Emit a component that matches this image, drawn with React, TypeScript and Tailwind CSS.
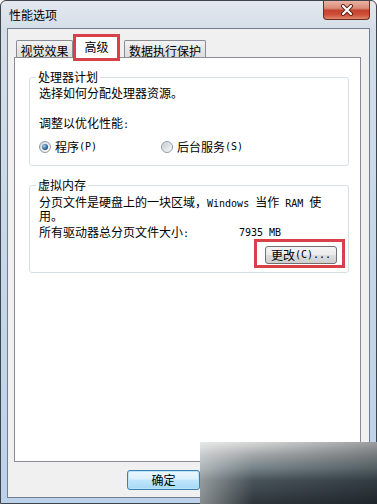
import React from "react";

const mono = "font-['DejaVu_Sans_Mono',monospace] text-[10px]";

function Radio({ checked }: { checked?: boolean }) {
  return (
    <div className="w-[12px] h-[12px] rounded-full border border-[#8f9aa5] bg-[linear-gradient(135deg,#d4d8dc,#fbfbfb)] flex items-center justify-center shrink-0">
      {checked ? (
        <div className="w-[6px] h-[6px] rounded-full bg-[radial-gradient(circle_at_35%_35%,#9fd0f2,#2a5d8c_60%,#17375a)]" />
      ) : (
        <div className="w-[8px] h-[8px] rounded-full bg-[linear-gradient(135deg,#c9cdd1,#f4f4f4)]" />
      )}
    </div>
  );
}

export default function App() {
  return (
    <div className="relative w-[377px] h-[504px] overflow-hidden bg-white font-['Noto_Sans_CJK_SC',sans-serif] text-black">
      <div className="w-[377px] h-[504px] flex flex-col border border-[#3d444c] rounded-t-[6px] bg-[linear-gradient(to_bottom,#e3e8ee_0px,#d5dee8_28px,#c3d6eb_60%,#bcd2ea_100%)]">
        {/* title bar */}
        <div className="h-[27px] flex items-start shrink-0">
          <div className="pl-[8px] pt-[7px] text-[12px] leading-[14px]">性能选项</div>
          <div className="ml-auto mr-[6px] w-[47px] h-[19px] rounded-b-[4px] border border-t-0 border-[#6b2c22] bg-[linear-gradient(to_bottom,#eab3a4_0%,#d98b78_40%,#c4432f_52%,#cc4e38_75%,#e0866a_100%)] flex items-center justify-center">
            <svg width="14" height="12" viewBox="0 0 14 12">
              <path d="M3 2 L11 10 M11 2 L3 10" stroke="#5a2018" strokeWidth="4" strokeLinecap="round" />
              <path d="M3 2 L11 10 M11 2 L3 10" stroke="#ffffff" strokeWidth="2.2" strokeLinecap="round" />
            </svg>
          </div>
        </div>

        {/* client area */}
        <div className="mx-[6px] h-[470px] shrink-0 border border-[#6f8096] bg-[#f0f0f0] flex flex-col">
          {/* tabs */}
          <div className="mt-[6px] pl-[8px] h-[23px] flex items-end text-[12px] leading-[14px]">
            <div className="w-[57px] h-[18px] border border-b-0 border-[#898c95] rounded-t-[2px] bg-[linear-gradient(to_bottom,#f3f3f3,#e5e5e5_50%,#dcdcdc)] flex items-center justify-center pt-[3px]">
              视觉效果
            </div>
            <div className="relative ml-[1px] w-[45px] h-[23px] border border-b-0 border-[#898c95] rounded-t-[2px] bg-white flex justify-center pt-[4px]">
              高级
              <div className="absolute left-[-2px] top-[-2px] w-[47px] h-[27px] border-[3px] border-[#d8414a]" />
            </div>
            <div className="ml-[5px] w-[82px] h-[18px] border border-b-0 border-[#898c95] rounded-t-[2px] bg-[linear-gradient(to_bottom,#f3f3f3,#e5e5e5_50%,#dcdcdc)] flex items-center justify-center pt-[3px]">
              数据执行保护
            </div>
          </div>

          {/* panel */}
          <div className="-mt-px ml-[6px] w-[347px] h-[405px] border border-[#898c95] bg-white flex flex-col text-[12px] leading-[14px]">
            {/* group 1 */}
            <fieldset className="mt-[12px] ml-[14px] w-[320px] border border-[#d5dfe5] rounded-[3px] pl-[9px] pt-[2px] pb-[11px]">
              <legend className="-ml-[3px] px-[2px] leading-[14px]">处理器计划</legend>
              <div>选择如何分配处理器资源。</div>
              <div className="mt-[16px]">
                调整以优化性能<span className={mono}>:</span>
              </div>
              <div className="mt-[8px] h-[14px] flex items-center">
                <div className="w-[122px] flex items-center">
                  <Radio checked />
                  <span className="ml-[4px]">程序</span>
                  <span className={mono}>(P)</span>
                </div>
                <div className="flex items-center">
                  <Radio />
                  <span className="ml-[4px]">后台服务</span>
                  <span className={mono}>(S)</span>
                </div>
              </div>
            </fieldset>

            {/* group 2 */}
            <fieldset className="mt-[12px] ml-[14px] w-[320px] border border-[#d5dfe5] rounded-[3px] pl-[9px] pt-[3px] pb-[8px]">
              <legend className="-ml-[3px] px-[2px] leading-[14px]">虚拟内存</legend>
              <div className="flex flex-col">
                <div className="h-[14px] leading-[14px] whitespace-nowrap">
                  分页文件是硬盘上的一块区域，<span className={mono}>Windows </span>当作<span className={mono}> RAM </span>使
                </div>
                <div className="h-[14px] leading-[14px]">用。</div>
              </div>
              <div className="mt-[3px] h-[14px] flex items-center">
                <div className="w-[200px]">
                  所有驱动器总分页文件大小<span className={mono}>:</span>
                </div>
                <span className={mono}>7935 MB</span>
              </div>
              <div className="mt-[6px] flex justify-end pr-[11px]">
                <div className="relative">
                  <div className="w-[72px] h-[18px] rounded-[3px] border border-[#707070] bg-[linear-gradient(to_bottom,#f4f4f4,#ebebeb_50%,#dddddd_51%,#cfcfcf)] flex items-center justify-center">
                    <span>更改</span>
                    <span className={mono}>(C)...</span>
                  </div>
                  <div className="absolute left-[-11px] top-[-7px] w-[91px] h-[29px] border-[3px] border-[#d8414a]" />
                </div>
              </div>
            </fieldset>
          </div>

          {/* OK button */}
          <div className="mt-[8px] ml-[119px] w-[73px] h-[20px] rounded-[3px] border border-[#3c7fb1] bg-[linear-gradient(to_bottom,#eaf6fd,#d9f0fc_45%,#bee6fd_50%,#a7d9f5)] flex items-center justify-center text-[12px] leading-[14px] shadow-[inset_0_0_0_1px_#b8e4fa]">
            确定
          </div>
        </div>
      </div>

      {/* blurred watermark overlay */}
      <div className="absolute left-[200px] top-[442px] w-[177px] h-[62px] bg-[linear-gradient(to_bottom,#d6d6d6_0%,#a0a4a6_20%,#6f7d82_42%,#3f4b51_62%,#232b30_100%)]">
        <div className="w-full h-full bg-[linear-gradient(to_right,rgba(255,255,255,0.45)_0%,rgba(255,255,255,0.05)_30%,rgba(20,26,30,0.3)_100%)]" />
      </div>
    </div>
  );
}
